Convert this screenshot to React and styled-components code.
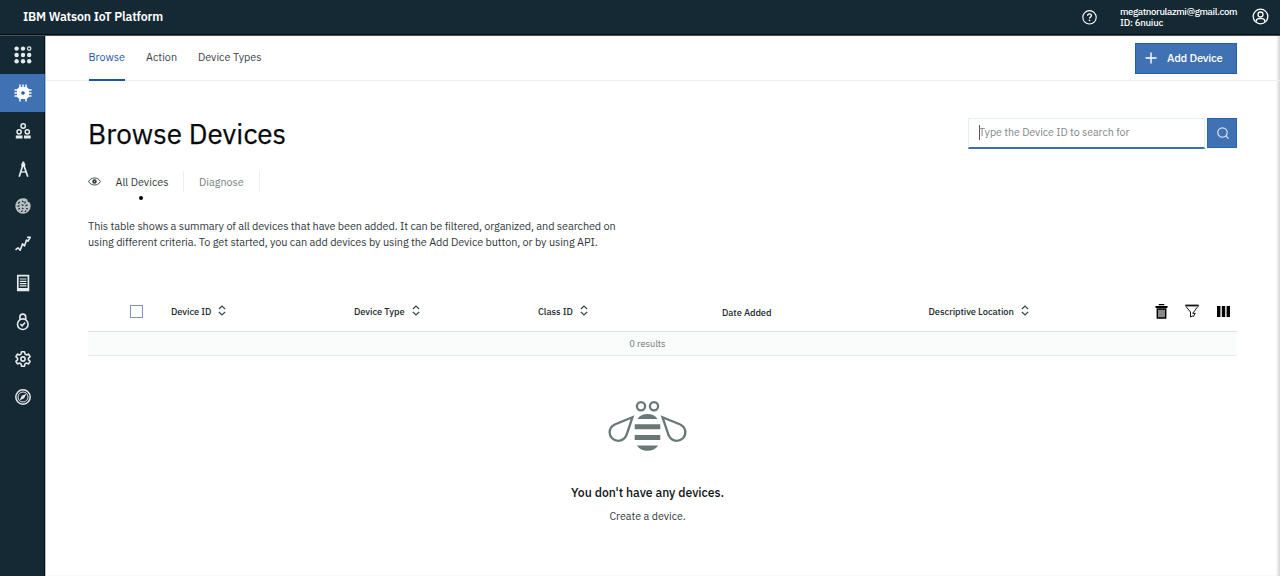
import React from "react";
import styled, { createGlobalStyle, css } from "styled-components";

const Global = createGlobalStyle`
  *, *::before, *::after { box-sizing: border-box; }
  html, body { margin: 0; height: 100%; }
  body {
    background: #fff;
    color: #1c2226;
    font-family: "IBM Plex Sans", Roboto, "Noto Sans", sans-serif;
    overflow: hidden;
  }
  svg { display: block; flex: none; }
`;

const Page = styled.div`
  display: flex;
  flex-direction: column;
  height: 576px;
  width: 1280px;
`;

const Header = styled.header`
  display: flex;
  align-items: center;
  flex: none;
  height: 36px;
  padding: 0 11px 2px 23px;
  background: #152934;
  border-bottom: 1px solid #4a5256;
  box-shadow: inset 0 -1px 0 #050c10;
  color: #fff;
`;

const Brand = styled.div`
  flex: 1;
  padding-bottom: 2px;
  font-size: 12.3px;
  font-weight: 600;
  letter-spacing: ${(p) => p.$track}px;
`;

const Account = styled.div`
  margin: 0 14px 0 22px;
  width: 118px;
  font-size: 9.6px;
  line-height: 11px;
  font-weight: 500;
  white-space: nowrap;
`;

const Track = styled.span`
  letter-spacing: ${(p) => p.$track || 0}px;
  white-space: nowrap;
`;

const Body = styled.div`
  display: flex;
  flex: 1;
  min-height: 0;
`;

const Sidebar = styled.nav`
  display: flex;
  flex-direction: column;
  flex: none;
  width: 46px;
  background: #152934;
  border-right: 1px solid #b9c0c4;
  box-shadow: inset -1px 0 0 #050f15;
`;

const NavItem = styled.a`
  display: flex;
  align-items: center;
  justify-content: center;
  height: ${(p) => p.$h || 38}px;
  color: #e6eaec;
  ${(p) => p.$active && css`
    background: #4071b3;
    box-shadow: inset -1px 0 0 #1c62b0;
    color: #fff;
  `}
`;

const Main = styled.main`
  flex: 1;
  min-width: 0;
  background: #fff;
  box-shadow: inset -3px 0 3px -1px #d4d4d4;
`;

const TabBar = styled.div`
  display: flex;
  align-items: stretch;
  height: 45px;
  padding: 0 43px 0 42.5px;
  border-bottom: 1px solid #eaf0f0;
`;

const Tab = styled.a`
  height: 45px;
  margin-right: 21px;
  padding-top: 12px;
  width: ${(p) => p.$w}px;
  font-size: 10.8px;
  line-height: 18px;
  white-space: nowrap;
  color: ${(p) => (p.$active ? "#1f57a4" : "#3a4347")};
  border-bottom: 2px solid ${(p) => (p.$active ? "#1d55a6" : "transparent")};
`;

const AddButton = styled.button`
  display: flex;
  align-items: center;
  gap: 10px;
  width: 102px;
  height: 31px;
  margin: 7px 0 0 auto;
  padding: 0 0 2px 9px;
  border: 1px solid #1c62b0;
  background: #4071b3;
  color: #fff;
  font-family: inherit;
  font-size: 11.2px;
  font-weight: 500;
`;

const Content = styled.div`
  padding: 37px 43px 0 42px;
`;

const TitleRow = styled.div`
  display: flex;
  justify-content: space-between;
  height: 50px;
`;

const Title = styled.h1`
  margin: 0;
  font-size: 27.8px;
  line-height: 33px;
  font-weight: 400;
  letter-spacing: 0.07px;
  color: #05090b;
  -webkit-text-stroke: 0.25px #05090b;
`;

const Search = styled.div`
  display: flex;
  gap: 2px;
  height: 31px;
`;

const SearchField = styled.div`
  display: flex;
  align-items: center;
  width: 237px;
  height: 31px;
  padding: 0 0 2px 10px;
  border: 1px solid #e6eeee;
  border-bottom: 2px solid #3c6db2;
  font-size: 10.7px;
  color: #7f888a;
`;

const Caret = styled.i`
  width: 1px;
  height: 15px;
  margin-right: -1px;
  background: #555;
`;

const SearchButton = styled.button`
  display: flex;
  align-items: center;
  justify-content: center;
  width: 30px;
  height: 30px;
  padding: 0 0 0 1px;
  border: 1px solid #2466b0;
  background: #4071b3;
  color: #d6e2f0;
`;

const Views = styled.div`
  display: flex;
  height: 37px;
  font-size: 10.8px;
  line-height: 23px;
`;

const Eye = styled.div`
  width: 27.5px;
  padding-top: 9px;
`;

const View = styled.div`
  position: relative;
  width: ${(p) => p.$w}px;
  height: 21px;
  margin-top: 3px;
  padding-left: ${(p) => p.$pad || 0}px;
  border-right: 1px solid #ecefef;
  white-space: nowrap;
  color: ${(p) => (p.$active ? "#30383c" : "#757e81")};
`;

const Dot = styled.i`
  position: absolute;
  left: 23.5px;
  top: 25px;
  width: 4px;
  height: 4px;
  border-radius: 50%;
  background: #000;
`;

const Intro = styled.p`
  margin: 0;
  padding-top: 13px;
  height: 86px;
  font-size: 10.9px;
  line-height: 16px;
  color: #30383c;
`;

const Line = styled.span`
  display: block;
  white-space: nowrap;
  letter-spacing: -0.098px;
`;

const TableHead = styled.div`
  display: grid;
  grid-template-columns: 83px 183px 184px 184px 206.5px 226px 1fr;
  height: 41px;
  border-bottom: 1px solid #dbe4e4;
  font-size: 9.3px;
  font-weight: 500;
  color: #20292d;
`;

const HeadCell = styled.div`
  display: flex;
  align-items: center;
  gap: 7px;
  height: 40px;
  padding-top: ${(p) => (p.$low ? 2 : 0)}px;
`;

const Checkbox = styled.span`
  width: 13px;
  height: 13px;
  margin-left: 42px;
  border: 1px solid #7d95c4;
  background: #fff;
`;

const Tools = styled.div`
  display: flex;
  align-items: center;
  gap: 17.5px;
  height: 40px;
`;

const Results = styled.div`
  height: 24px;
  background: #fafcfb;
  border-bottom: 1px solid #e6ecec;
  font-size: 9.3px;
  line-height: 24px;
  text-align: center;
  color: #6c7578;
  padding-right: 30px;
`;

const Empty = styled.div`
  display: flex;
  flex-direction: column;
  align-items: center;
  padding: 44px 30px 0 0;
`;

const EmptyTitle = styled.h2`
  margin: 31px 0 0;
  font-size: 12.2px;
  line-height: 18px;
  font-weight: 500;
  color: #0d1214;
`;

const EmptyText = styled.div`
  margin-top: 7px;
  font-size: 10.7px;
  line-height: 16px;
  color: #30383c;
`;

const Svg = ({ s = 18, h, children, ...rest }) => (
  <svg width={s} height={h || s} viewBox={`0 0 ${s} ${h || s}`} fill="none" stroke="currentColor" {...rest}>
    {children}
  </svg>
);

const GRID = [2.6, 9, 15.2];

const AppsIcon = () => (
  <Svg>
    {GRID.map((y, row) =>
      GRID.map((x, col) =>
        col === 2 && row === 0 ? (
          <circle key={x + "-" + y} cx={x} cy={y} r="1.7" strokeWidth="1.2" />
        ) : (
          <circle key={x + "-" + y} cx={x} cy={y} r="2.2" fill="currentColor" stroke="none" />
        )
      )
    )}
  </Svg>
);

const ChipIcon = () => (
  <Svg>
    <path d="M5.2 3h7.600L15 5.200v7.600L12.800 15H5.200L3 12.800V5.200Z" fill="currentColor" stroke="none" />
    <path d="M6 .5v17M9 .5v3M12 .5v17M.5 6h17M.5 9h3M14.500 9h3M.5 12h17" strokeWidth="1.500" />
    <circle cx="9" cy="9" r="1.800" fill="#1e5ba5" stroke="none" />
  </Svg>
);

const PeopleIcon = () => (
  <Svg strokeWidth="1.5">
    <circle cx="9.200" cy="4" r="2.200" />
    <circle cx="5.100" cy="9.800" r="2.100" />
    <circle cx="13.300" cy="9.800" r="2.100" />
    <path d="M1.800 13.400h6.700v3.200H1.800ZM10 13.400h6.700v3.200H10Z" fill="currentColor" stroke="none" />
  </Svg>
);

const CompassToolIcon = () => (
  <Svg strokeWidth="1.7">
    <path d="M9.300 1.500v3" strokeWidth="2" />
    <circle cx="9.300" cy="4.900" r="1.300" fill="currentColor" />
    <path d="M8.700 5.500 5.200 16.800M9.900 5.500l3.900 11.300" />
    <path d="M6.500 12h6" strokeWidth="1.300" />
  </Svg>
);

const CookieIcon = () => (
  <Svg color="#b9c1c5">
    <path d="M9 1.300c1.700 0 3.200.4 4.400 1.400l.3 2 2 .8c.7 1 1 2.200 1 3.500A7.700 7.700 0 1 1 9 1.300Z" fill="currentColor" stroke="none" />
    <path d="M4 6.500 6 5M8 4l1.500 1M11.500 4.500l-1 2M3.500 9.500l2-1M7.500 7.800l2 .6M11.500 9l2-1.200M4.500 12.500l1.300-1.300M8 11l1.500 1M12 11.500l2 .5M7 14.500l1.600-.6M11 15l1-1.500" stroke="#152934" strokeWidth="1.200" />
  </Svg>
);

const TrendIcon = () => (
  <Svg strokeWidth="1.6">
    <path d="M1.500 14.800 4 12.800l2.200 2.400L8.500 8.700l2 2.300 2-6 1.500 1.200 2.300-4" strokeLinejoin="round" />
    <path d="M13 2.300h3.800" />
  </Svg>
);

const ReportIcon = () => (
  <Svg>
    <path d="M3.800 1.600h10.600v14.800H3.800Z" strokeWidth="1.700" />
    <path d="M4 15h10" strokeWidth="2" />
    <path d="M5.800 5h6.600M5.800 7.300h6.600M5.800 9.600h6.600M5.800 11.900h6.600" strokeWidth="1.200" />
  </Svg>
);

const LockIcon = () => (
  <Svg strokeWidth="1.6">
    <circle cx="8.800" cy="11.200" r="5.300" />
    <path d="M5.900 6.800V4a2.900 2.900 0 0 1 5.800 0v2.800" />
    <path d="m6.400 11.200 1.700 1.600 3-3.300" />
  </Svg>
);

const GearIcon = () => (
  <Svg strokeWidth="1.600" strokeLinejoin="round">
    <path d="M7.500 1.800h3l.5 2.300 1.300.8 2.300-.8 1.500 2.500L14.400 8.300v1.400l1.700 1.700-1.500 2.500-2.300-.8-1.300.8-.5 2.300h-3L7 13.900l-1.300-.8-2.300.8-1.500-2.500 1.700-1.700V8.300L1.900 6.600l1.500-2.500 2.300.8L7 4.100Z" />
    <circle cx="9" cy="9" r="2.100" />
  </Svg>
);

const ExploreIcon = () => (
  <Svg strokeWidth="1.500">
    <circle cx="9" cy="9" r="7.200" />
    <circle cx="9" cy="9" r="5" strokeWidth="1" />
    <path d="m12.300 5.700-2.100 4.500-4.500 2.100 2.100-4.500Z" fill="currentColor" stroke="none" />
  </Svg>
);

const HelpIcon = () => (
  <Svg s={16} strokeWidth="1.100">
    <circle cx="7.500" cy="8.300" r="6.700" />
    <path d="M5.600 6.800c0-1.200.8-1.900 1.900-1.900s1.900.7 1.900 1.700c0 1.300-1.900 1.400-1.900 3" strokeWidth="1.300" />
    <circle cx="7.500" cy="11.400" r=".8" fill="currentColor" stroke="none" />
  </Svg>
);

const UserIcon = () => (
  <Svg s={17} strokeWidth="1.300">
    <circle cx="8.500" cy="8.500" r="7.300" />
    <circle cx="8.500" cy="6.500" r="2.500" />
    <path d="M4.200 13.800c0-2.200 1-3.100 2.500-3.100h3.600c1.500 0 2.500.9 2.500 3.100" />
  </Svg>
);

const SortIcon = () => (
  <Svg s={8} h={13} strokeWidth="1.300" color="#3a484d">
    <path d="M.9 3.900 4 1.100l3.100 2.800M.9 7.100 4 9.900l3.100-2.800" />
  </Svg>
);

const EyeIcon = () => (
  <Svg s={13} h={9} color="#30383c">
    <path d="M.6 4.500C1.900 2.100 4 1 6.500 1s4.600 1.100 5.900 3.500C11.100 6.900 9 8 6.500 8S1.900 6.900.6 4.500Z" strokeWidth=".9" />
    <circle cx="6.500" cy="4.500" r="2.200" fill="currentColor" stroke="none" />
    <circle cx="6.500" cy="4.500" r=".6" fill="#fff" stroke="none" />
  </Svg>
);

const TrashIcon = () => (
  <Svg s={13} h={15} stroke="none" color="#000">
    <path d="M3.700 0h5.600v1.200H3.700ZM.5 2h12v2H.5Z" fill="currentColor" />
    <path d="M2.300 5h8.400v9H2.300Z" fill="#8a8a8a" stroke="#000" strokeWidth="1.400" />
  </Svg>
);

const FilterIcon = () => (
  <Svg s={14} h={14} strokeWidth="1" color="#151515">
    <path d="M.3 1.500h13.400" strokeWidth="1.800" />
    <path d="M1 2.500 5.500 8v5l2.300-1.200M13 2.500 10 6" />
    <path d="m10.300 6-2.600 3.300h2.600L8 13" />
  </Svg>
);

const ColumnsIcon = () => (
  <Svg s={13} h={11} stroke="none" color="#000">
    <path d="M0 0h3.400v11H0ZM4.800 0h3.400v11H4.800ZM9.600 0H13v11H9.600Z" fill="currentColor" />
  </Svg>
);

const PlusIcon = () => (
  <Svg s={12} strokeWidth="1.400">
    <path d="M6 .5v11M.5 6h11" />
  </Svg>
);

const SearchIcon = () => (
  <Svg s={12} strokeWidth="1.200">
    <circle cx="5.500" cy="5.500" r="4.700" />
    <path d="m9 9 2.600 2.600" />
  </Svg>
);

const BeeIcon = () => (
  <Svg s={80} h={52} color="#697876" strokeWidth="2.300">
    <circle cx="33" cy="6.300" r="4.100" />
    <circle cx="46" cy="6.300" r="4.100" />
    <path d="M24.500 17.200 7.300 24.200C1.300 26.700 0 33.500 3.800 38c4.500 4.500 11.500 3.500 14.500-2.500Z" />
    <path d="M54.500 17.200 71.700 24.200C77.700 26.700 79 33.500 75.200 38c-4.500 4.500-11.500 3.500-14.500-2.500Z" />
    <path d="M29.500 19C31.500 15.800 35 14 39.500 14s8 1.800 10 5ZM26.700 24.300h25.600v5H26.700ZM26.700 35h25.600v5H26.700ZM28.800 45.500h21.400C48 49 44 50.700 39.500 50.700S31 49 28.800 45.500Z" fill="currentColor" stroke="none" />
  </Svg>
);

const NAV = [
  { id: "apps", icon: AppsIcon },
  { id: "devices", icon: ChipIcon, active: true },
  { id: "members", icon: PeopleIcon },
  { id: "design", icon: CompassToolIcon, h: 37 },
  { id: "rules", icon: CookieIcon },
  { id: "usage", icon: TrendIcon },
  { id: "reports", icon: ReportIcon, h: 40 },
  { id: "security", icon: LockIcon, h: 37 },
  { id: "settings", icon: GearIcon },
  { id: "explore", icon: ExploreIcon },
];

const COLUMNS = [
  { label: "Device ID", sort: true },
  { label: "Device Type", sort: true },
  { label: "Class ID", sort: true },
  { label: "Date Added", sort: false },
  { label: "Descriptive Location", sort: true },
];

const INTRO = [
  "This table shows a summary of all devices that have been added. It can be filtered, organized, and searched on",
  "using different criteria. To get started, you can add devices by using the Add Device button, or by using API.",
];

export default function App() {
  return (
    <>
      <Global />
      <Page>
        <Header>
          <Brand $track={-0.15}>IBM Watson IoT Platform</Brand>
          <HelpIcon />
          <Account>
            <div><Track $track={-0.36}>megatnorulazmi@gmail.com</Track></div>
            <div><Track $track={-0.25}>ID: 6nuiuc</Track></div>
          </Account>
          <UserIcon />
        </Header>
        <Body>
          <Sidebar>
            {NAV.map(({ id, icon: Icon, active, h }) => (
              <NavItem key={id} $active={active} $h={h}><Icon /></NavItem>
            ))}
          </Sidebar>
          <Main>
            <TabBar>
              <Tab $active $w={36.5}>Browse</Tab>
              <Tab $w={31}>Action</Tab>
              <Tab $w={63}>Device Types</Tab>
              <AddButton>
                <PlusIcon />
                <Track $track={-0.2}>Add Device</Track>
              </AddButton>
            </TabBar>
            <Content>
              <TitleRow>
                <Title>Browse Devices</Title>
                <Search>
                  <SearchField>
                    <Caret />
                    <Track $track={-0.07}>Type the Device ID to search for</Track>
                  </SearchField>
                  <SearchButton><SearchIcon /></SearchButton>
                </Search>
              </TitleRow>
              <Views>
                <Eye><EyeIcon /></Eye>
                <View $active $w={68.5}>All Devices<Dot /></View>
                <View $w={76} $pad={15}>Diagnose</View>
              </Views>
              <Intro>
                {INTRO.map((line) => <Line key={line}>{line}</Line>)}
              </Intro>
              <TableHead>
                <HeadCell><Checkbox /></HeadCell>
                {COLUMNS.map((c) => (
                  <HeadCell key={c.label} $low={!c.sort}>
                    <Track $track={-0.05}>{c.label}</Track>
                    {c.sort && <SortIcon />}
                  </HeadCell>
                ))}
                <Tools><TrashIcon /><FilterIcon /><ColumnsIcon /></Tools>
              </TableHead>
              <Results>0 results</Results>
              <Empty>
                <BeeIcon />
                <EmptyTitle>You don't have any devices.</EmptyTitle>
                <EmptyText>Create a device.</EmptyText>
              </Empty>
            </Content>
          </Main>
        </Body>
      </Page>
    </>
  );
}
